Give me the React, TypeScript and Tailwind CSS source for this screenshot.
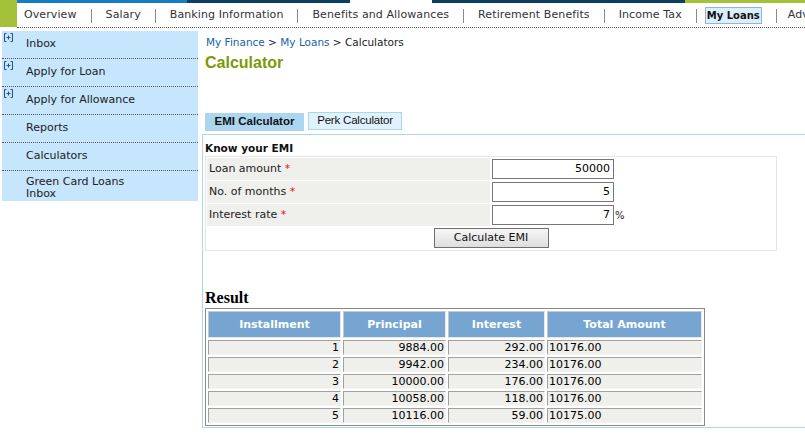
const NAV = ['Overview', 'Salary', 'Banking Information', 'Benefits and Allowances', 'Retirement Benefits', 'Income Tax'];

const SIDE = [
    { label: 'Inbox', plus: true },
    { label: 'Apply for Loan', plus: true },
    { label: 'Apply for Allowance', plus: true },
    { label: 'Reports', plus: false },
    { label: 'Calculators', plus: false },
];

const FIELDS = [
    { label: 'Loan amount', value: '50000', unit: '' },
    { label: 'No. of months', value: '5', unit: '' },
    { label: 'Interest rate', value: '7', unit: '%' },
];

const ROWS = [
    ['1', '9884.00', '292.00', '10176.00'],
    ['2', '9942.00', '234.00', '10176.00'],
    ['3', '10000.00', '176.00', '10176.00'],
    ['4', '10058.00', '118.00', '10176.00'],
    ['5', '10116.00', '59.00', '10175.00'],
];

function PlusIcon() {
    return (
        <svg width="9" height="9" viewBox="0 0 9 9" fill="none" stroke="#234f9c" strokeWidth="1">
            <path d="M2.5 0.5H0.5V8.5H2.5M6.5 0.5H8.5V8.5H6.5M4.5 2.5V6.5M2.5 4.5H6.5" />
        </svg>
    );
}

export default function App() {
    return (
        <div className="w-[805px] h-[443px] overflow-hidden bg-white text-[#222] text-[11px] font-['DejaVu_Sans',Verdana,sans-serif]">
            {/* Top navigation */}
            <div className="flex h-[28px]">
                <div className="w-[17px] h-[27px] shrink-0 bg-[#a3c23a]" />
                <div className="flex-1 min-w-0 overflow-hidden flex flex-col border-b border-dotted border-[#555]">
                    <div className="flex h-[3px] shrink-0">
                        <div className="w-[170px] shrink-0 bg-[#137cc2]" />
                        <div className="w-[163px] shrink-0 bg-[#0b3f60]" />
                        <div className="w-[82px] shrink-0" />
                        <div className="w-[253px] shrink-0 bg-[#0b3f60]" />
                        <div className="flex-1 bg-[#a3c23a]" />
                    </div>
                    <div className="flex-1 flex items-center pl-[7px] text-[#333] whitespace-nowrap tracking-[0.1px]">
                        {NAV.map((item) => (
                            <div key={item} className="flex items-center shrink-0">
                                <span>{item}</span>
                                <span className="mx-[14px] w-px h-[14px] mt-[2px] bg-[#8a8a8a]" />
                            </div>
                        ))}
                        <span className="shrink-0 ml-[-6px] px-[1px] h-[17px] leading-[15px] border border-[#8db6da] bg-[#dcedfb] font-bold text-[10px] tracking-normal text-[#111]">My Loans</span>
                        <span className="shrink-0 mx-[14px] w-px h-[14px] mt-[2px] bg-[#8a8a8a]" />
                        <span className="shrink-0 ml-[-3px]">Advances</span>
                    </div>
                </div>
            </div>

            <div className="flex items-start">
                {/* Sidebar */}
                <div className="shrink-0 ml-[2px] mt-[3px] w-[196px] bg-[#c5e6fc] text-[#222]">
                    {SIDE.map((s) => (
                        <div key={s.label} className="flex h-[28px] border-b border-dotted border-[#555]">
                            <div className="w-[24px] shrink-0 pl-[2px] pt-[2px]">{s.plus && <PlusIcon />}</div>
                            <div className="flex items-center">{s.label}</div>
                        </div>
                    ))}
                    <div className="flex h-[30px]">
                        <div className="w-[24px] shrink-0" />
                        <div className="pt-[5px] leading-[12px]">Green Card Loans<br />Inbox</div>
                    </div>
                </div>

                {/* Content */}
                <div className="ml-[4px] w-[620px] shrink-0">
                    <div className="pt-[7px] pl-[4px] leading-[14px] text-[10.5px]">
                        <span className="text-[#1662a6]">My Finance</span>
                        <span> &gt; </span>
                        <span className="text-[#1662a6]">My Loans</span>
                        <span> &gt; Calculators</span>
                    </div>
                    <h1 className="mt-[4px] pl-[3px] leading-[20px] text-[16px] font-bold text-[#7b9a05] font-['Liberation_Sans',Arial,sans-serif]">Calculator</h1>

                    {/* Tabs */}
                    <div className="mt-[39px] h-[22px] flex items-start font-['Liberation_Sans',Arial,sans-serif] text-[11.5px] text-[#111]">
                        <div className="ml-[3px] mt-[1px] w-[99px] h-[18px] bg-[#abd6ef] flex items-center justify-center font-bold">EMI Calculator</div>
                        <div className="ml-[4px] w-[94px] h-[18px] bg-[#e0f2fd] border border-[#a9d7ee] flex items-center justify-center tracking-[-0.2px]">Perk Calculator</div>
                    </div>

                    {/* Panel */}
                    <div className="h-[294px] border border-r-0 border-[#a9d7ee] pl-[2px] pt-[6px]">
                        <div className="leading-[14px] font-bold text-[10.5px] text-[#111]">Know your EMI</div>
                        <div className="mt-[1px] w-[572px] border border-[#e6e6e6] p-px flex flex-col gap-px">
                            {FIELDS.map((f) => (
                                <div key={f.label} className="flex h-[22px]">
                                    <div className="w-[283px] shrink-0 bg-[#efefeb] flex items-center pl-[2px]">
                                        {f.label}&nbsp;<span className="text-[#e4161b]">*</span>
                                    </div>
                                    <div className="flex items-center pl-[2px]">
                                        <div className="w-[122px] h-[20px] border border-[#767676] bg-white text-right pr-[3px] leading-[18px] text-black">{f.value}</div>
                                        {f.unit && <span className="ml-[1px] text-[10px]">{f.unit}</span>}
                                    </div>
                                </div>
                            ))}
                            <div className="h-[22px] flex items-center justify-center">
                                <button className="w-[115px] h-[20px] border border-[#6f6f6f] bg-gradient-to-b from-[#f6f6f6] to-[#dedede] text-[11px] text-[#111] leading-[18px]">Calculate EMI</button>
                            </div>
                        </div>

                        <div className="mt-[38px] leading-[18px] text-[16px] font-bold text-black font-['Liberation_Serif','Times_New_Roman',serif]">Result</div>
                        <table className="mt-px w-[500px] table-fixed border-separate border-spacing-[2px] border border-[#8a8a8a]">
                            <colgroup>
                                <col className="w-[133px]" />
                                <col className="w-[103px]" />
                                <col className="w-[97px]" />
                                <col className="w-[155px]" />
                            </colgroup>
                            <thead>
                                <tr>
                                    {['Installment', 'Principal', 'Interest', 'Total Amount'].map((h) => (
                                        <th key={h} className="h-[27px] p-0 pt-[2px] bg-[#76a5d2] text-white font-bold text-center border border-t-[#c8c8c8] border-l-[#c8c8c8] border-b-[#e8e8e8] border-r-[#e8e8e8]">{h}</th>
                                    ))}
                                </tr>
                            </thead>
                            <tbody>
                                {ROWS.map((r) => (
                                    <tr key={r[0]}>
                                        {r.map((c, i) => (
                                            <td
                                                key={i}
                                                className={`h-[15px] py-0 leading-[13px] bg-[#efefeb] text-black border border-t-[#a0a0a0] border-l-[#a0a0a0] border-b-[#f4f4f4] border-r-[#f4f4f4] ${i === 3 ? 'text-left pl-px' : 'text-right pr-px'}`}
                                            >
                                                {c}
                                            </td>
                                        ))}
                                    </tr>
                                ))}
                            </tbody>
                        </table>
                    </div>
                </div>
            </div>
        </div>
    );
}
